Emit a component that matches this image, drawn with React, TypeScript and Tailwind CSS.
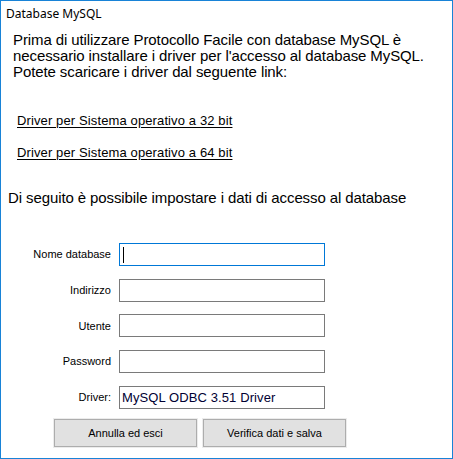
const fieldFont = { fontFamily: '"Liberation Sans", Arial, sans-serif' };

function Field({ label, value, focused }: { label: string; value?: string; focused?: boolean }) {
  return (
    <div className="flex items-center h-[23px]">
      <div className="w-[111px] pr-[1px] text-right text-[11px] text-black" style={fieldFont}>
        {label}
      </div>
      <div
        className={`ml-[7px] w-[206px] h-[23px] bg-white flex items-center pl-[2px] ${
          focused ? 'border border-[#0078d7]' : 'border border-[#7a7a7a]'
        }`}
      >
        {focused && <span className="ml-[1px] w-[1px] h-[16px] bg-black" />}
        {value && (
          <span className="text-[13px] text-[#000033] tracking-[0.1px]" style={fieldFont}>
            {value}
          </span>
        )}
      </div>
    </div>
  );
}

export default function App() {
  return (
    <div className="w-[453px] h-[459px] border border-[#1883d7] bg-white flex flex-col" style={fieldFont}>
      {/* Title */}
      <div className="h-[24px] pl-[5px] pt-[4px] text-[12px] text-black" style={{ fontFamily: '"Noto Sans", "Open Sans", sans-serif' }}>
        Database MySQL
      </div>

      {/* Intro */}
      <div className="pl-[12px] mt-[7px] text-[15px] leading-[16px] tracking-[-0.1px] text-black whitespace-nowrap">
        <p>Prima di utilizzare Protocollo Facile con database MySQL è</p>
        <p>necessario installare i driver per l'accesso al database MySQL.</p>
        <p>Potete scaricare i driver dal seguente link:</p>
      </div>

      {/* Links */}
      <div className="pl-[16px] mt-[33px] flex flex-col gap-[17px] text-[13px] leading-[15px] tracking-[0.12px] text-black">
        <span className="underline underline-offset-2">Driver per Sistema operativo a 32 bit</span>
        <span className="underline underline-offset-2">Driver per Sistema operativo a 64 bit</span>
      </div>

      <div className="pl-[7px] mt-[30px] text-[15px] leading-[16px] tracking-[-0.1px] text-black whitespace-nowrap">
        Di seguito è possibile impostare i dati di accesso al database
      </div>

      {/* Form */}
      <div className="mt-[37px] flex flex-col gap-[12.7px]">
        <Field label="Nome database" focused />
        <Field label="Indirizzo" />
        <Field label="Utente" />
        <Field label="Password" />
        <Field label="Driver:" value="MySQL ODBC 3.51 Driver" />
      </div>

      {/* Buttons */}
      <div className="mt-[10px] pl-[53px] flex gap-[6px]">
        <button className="w-[143px] h-[28px] bg-[#e1e1e1] border border-[#adadad] outline outline-1 outline-[#ececec] text-[11px] text-black">
          Annulla ed esci
        </button>
        <button className="w-[143px] h-[28px] bg-[#e1e1e1] border border-[#adadad] outline outline-1 outline-[#ececec] text-[11px] text-black">
          Verifica dati e salva
        </button>
      </div>
    </div>
  );
}
